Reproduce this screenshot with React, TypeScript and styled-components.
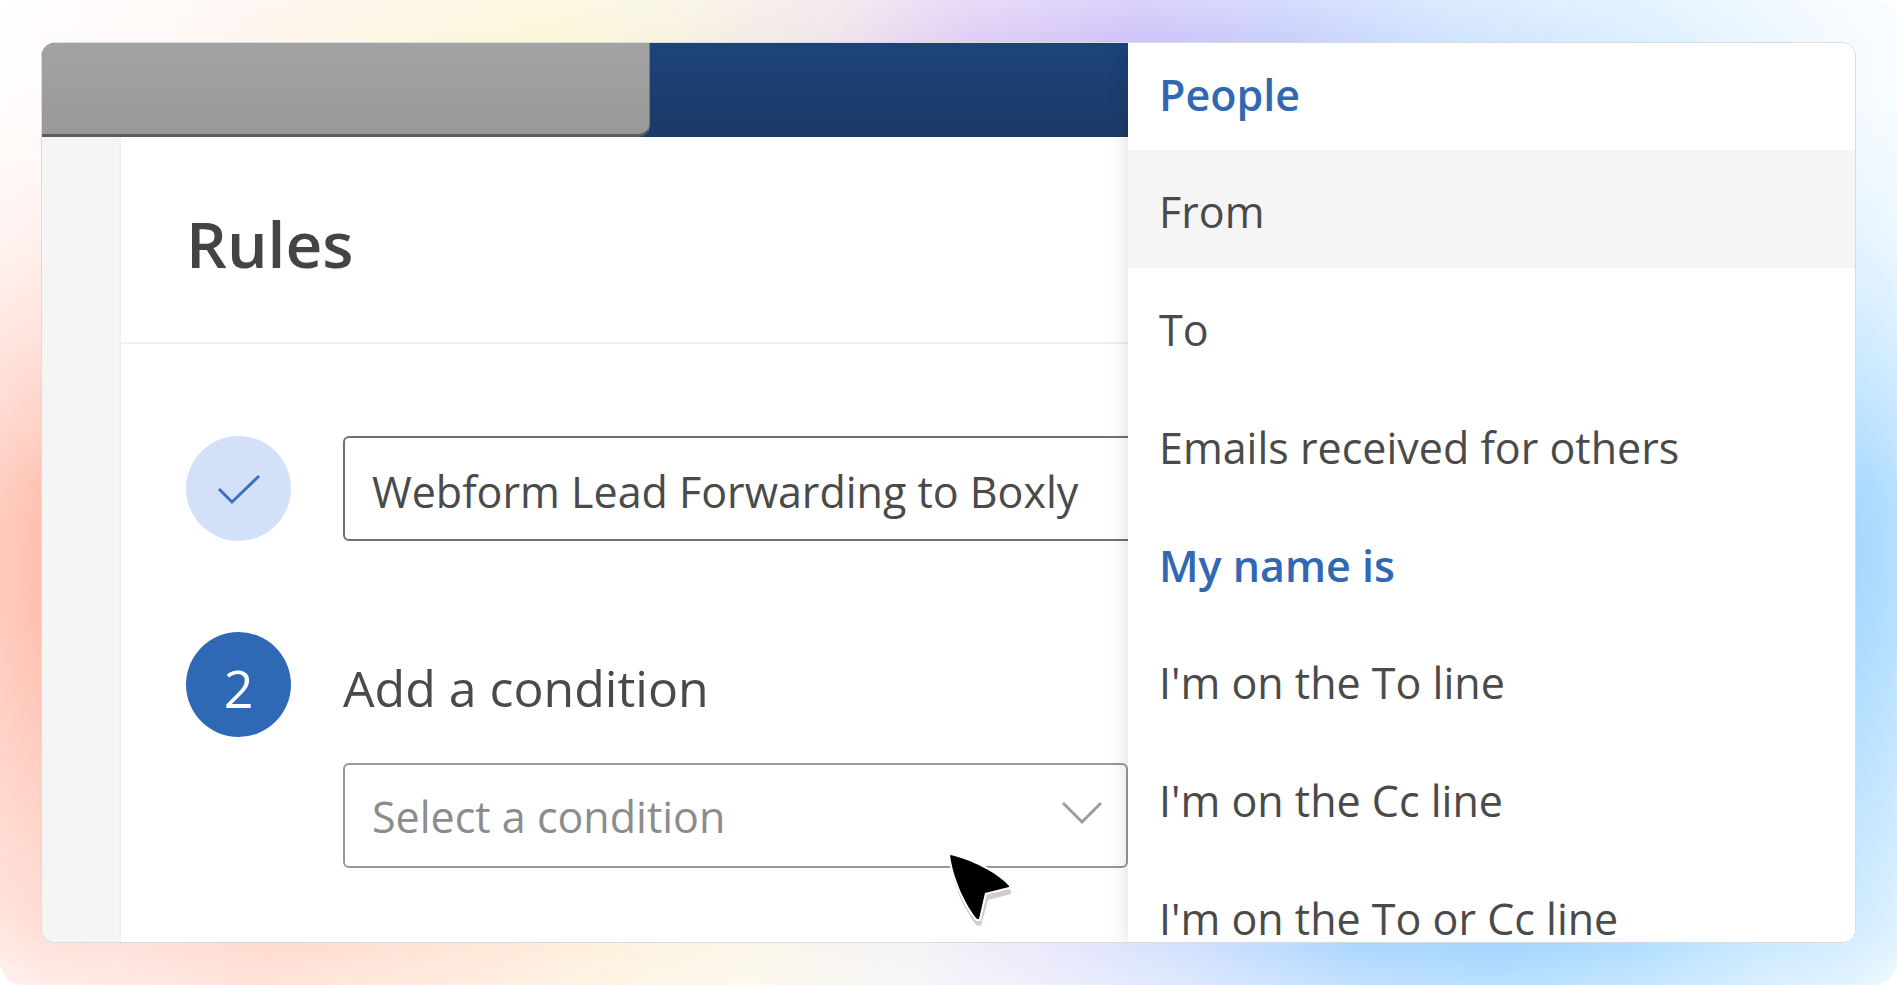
import React from "react";
import styled, { createGlobalStyle } from "styled-components";

const GlobalStyle = createGlobalStyle`
  * { box-sizing: border-box; }
  body { margin: 0; background: #fff; }
  h1, h2, ul, p { margin: 0; padding: 0; }
  body, input, select, button { font-family: "Open Sans", "Noto Sans", sans-serif; color: #4a4a4a; }
`;

const Backdrop = styled.div`
  position: relative;
  isolation: isolate;
  overflow: hidden;
  height: 100vh;
  padding: 42px 41px;
  border-radius: 24px;
  background:
    radial-gradient(ellipse 8% 42% at 3% 58%, #ffbaa9 0%, #ffbaa900 100%),
    radial-gradient(ellipse 9% 46% at 97% 56%, #9ed5ff 0%, #9ed5ff00 100%),
    linear-gradient(0deg, #ffffff55, #ffffff00 60px),
    linear-gradient(90deg, #ffe8e2 0%, #ffddd6 7%, #ffd6c8 14%, #ffe0d0 22%, #fdf0da 33%, #fbf6e6 39%, #f4f2f4 48%, #e8e6fa 55%, #cfdefd 62%, #a5d2ff 71%, #97d0ff 79%, #a6d9ff 86%, #cce9ff 94%, #e6f5ff 100%);

  &::before {
    content: "";
    position: absolute;
    inset: 0;
    z-index: -1;
    background:
      linear-gradient(180deg, #ffffff55, #ffffff00 60px),
      linear-gradient(90deg, #fffdfd 0%, #fff8f6 9%, #fff3ea 14%, #fdf5e0 21%, #fbf6d3 29%, #f6f0dd 36%, #eee2e8 44%, #dcc9f3 51%, #c9bcf8 60%, #c2cbfb 68%, #cbe2fe 77%, #d6edfe 86%, #eff8ff 95%, #f8fcff 100%);
    mask-image: linear-gradient(#000 8%, transparent 50%);
  }
`;

const Card = styled.main`
  display: grid;
  grid-template-columns: minmax(0, 1086fr) minmax(0, 727fr);
  height: 100%;
  overflow: hidden;
  border: 1px solid #d5dce4;
  border-radius: 14px;
  background: #fff;
`;

const Workspace = styled.section`
  display: flex;
  flex-direction: column;
  min-width: 0;
  overflow: hidden;
`;

const TopBar = styled.header`
  flex: none;
  height: 94px;
  background: linear-gradient(#1d4379, #1b3b68);
`;

const SearchShade = styled.div`
  width: 56%;
  height: 94px;
  border-bottom: 3px solid #5c5c5c;
  border-right: 1px solid #75797f;
  border-bottom-right-radius: 12px;
  background: linear-gradient(#a3a3a3, #999);
`;

const Body = styled.div`
  flex: 1;
  display: flex;
`;

const Rail = styled.div`
  flex: none;
  width: 79px;
  border-right: 2px solid #f0f0f0;
  background: #f5f5f5;
`;

const Rules = styled.div`
  flex: 1;
  min-width: 0;
`;

const TitleRow = styled.div`
  height: 207px;
  padding: 61px 65px 0;
  border-bottom: 2px solid #f0f0f0;
`;

const Title = styled.h1`
  font-size: 64px;
  line-height: 92px;
  font-weight: 600;
  color: #444;
`;

const Steps = styled.div`
  display: flex;
  flex-direction: column;
  gap: 91px;
  padding: 92px 0 0 65px;
`;

const Step = styled.div`
  display: grid;
  grid-template-columns: 105px minmax(0, 1fr);
  column-gap: 52px;
`;

const Badge = styled.div<{ $done?: boolean }>`
  display: flex;
  align-items: center;
  justify-content: center;
  width: 105px;
  height: 105px;
  border-radius: 50%;
  font-size: 52px;
  line-height: 72px;
  padding-top: ${(p) => (p.$done ? 0 : 6)}px;
  color: ${(p) => (p.$done ? "#3a72bd" : "#fff")};
  background: ${(p) => (p.$done ? "#d3e1f8" : "#2f69b5")};
`;

const NameInput = styled.input`
  width: calc(100% + 24px);
  height: 105px;
  padding: 6px 27px 0;
  border: 2px solid #707070;
  border-radius: 6px;
  background: #fff;
  font-size: 43px;
  outline: none;
`;

const StepLabel = styled.label`
  display: block;
  height: 105px;
  padding-top: 20px;
  font-size: 50px;
  line-height: 72px;
`;

const SelectWrap = styled.div`
  position: relative;
  margin-top: 26px;
`;

const ConditionSelect = styled.select`
  appearance: none;
  width: 100%;
  height: 105px;
  padding: 2px 27px 0;
  border: 2px solid #999;
  border-radius: 6px;
  background: #fff;
  font-size: 43px;
  color: #8c8c8c;
  outline: none;
`;

const Chevron = styled.svg`
  position: absolute;
  right: 26px;
  top: 38px;
  pointer-events: none;
`;

const Pointer = styled.svg`
  position: absolute;
  right: 110px;
  top: 87px;
  pointer-events: none;
`;

const Menu = styled.aside`
  z-index: 1;
  overflow: hidden;
  background: #fff;
  box-shadow: 0 0 20px rgba(0, 0, 0, 0.15);
`;

const MenuList = styled.div`
  display: flex;
  flex-direction: column;
  margin-top: -10px;
`;

const MenuHeading = styled.h2`
  flex: none;
  height: 117px;
  padding: 30px 31px 0;
  font-size: 43px;
  line-height: 64px;
  font-weight: 600;
  color: #3168b3;
`;

const MenuItem = styled.button<{ $active?: boolean }>`
  flex: none;
  display: flex;
  height: 118px;
  padding: 30px 31px 0;
  border: 0;
  font-size: 43px;
  line-height: 64px;
  text-align: left;
  background: ${(p) => (p.$active ? "#f5f5f5" : "#fff")};
`;

export default function App() {
  return (
    <>
      <GlobalStyle />
      <Backdrop>
        <Card>
          <Workspace>
            <TopBar>
              <SearchShade />
            </TopBar>
            <Body>
              <Rail />
              <Rules>
                <TitleRow>
                  <Title>Rules</Title>
                </TitleRow>
                <Steps>
                  <Step>
                    <Badge $done>
                      <svg width="44" height="34" viewBox="0 0 44 34" fill="none" stroke="currentColor" strokeWidth="3" aria-label="Done">
                        <path d="M2 17 15 30 42 4" />
                      </svg>
                    </Badge>
                    <NameInput aria-label="Rule name" defaultValue="Webform Lead Forwarding to Boxly" />
                  </Step>
                  <Step>
                    <Badge>2</Badge>
                    <div>
                      <StepLabel htmlFor="condition">Add a condition</StepLabel>
                      <SelectWrap>
                        <ConditionSelect id="condition">
                          <option>Select a condition</option>
                        </ConditionSelect>
                        <Chevron width="40" height="24" viewBox="0 0 40 24" fill="none" stroke="#9b9b9b" strokeWidth="3">
                          <path d="M1 2 20 21 39 2" />
                        </Chevron>
                        <Pointer width="72" height="80" viewBox="0 0 72 80">
                          <path d="M4 9C24 13 52 27 65 41L65 44 42 50 35 76 30 75C19 60 6 35 4 9Z" fill="#d3cbcd" />
                          <path d="M4 5C24 9 52 23 63 36L63 37 39 43 33 69 31 69C20 56 7 29 4 5Z" fill="#000" stroke="#fff" strokeWidth="4" paintOrder="stroke" />
                        </Pointer>
                      </SelectWrap>
                    </div>
                  </Step>
                </Steps>
              </Rules>
            </Body>
          </Workspace>
          <Menu>
            <MenuList>
              <MenuHeading>People</MenuHeading>
              <MenuItem $active>From</MenuItem>
              <MenuItem>To</MenuItem>
              <MenuItem>Emails received for others</MenuItem>
              <MenuHeading>My name is</MenuHeading>
              <MenuItem>I'm on the To line</MenuItem>
              <MenuItem>I'm on the Cc line</MenuItem>
              <MenuItem>I'm on the To or Cc line</MenuItem>
            </MenuList>
          </Menu>
        </Card>
      </Backdrop>
    </>
  );
}
